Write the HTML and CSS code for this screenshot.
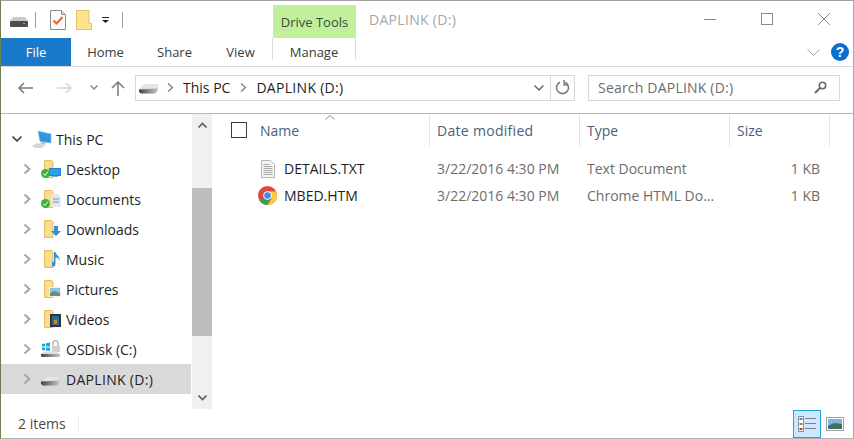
FILE: index.html
```html
<!DOCTYPE html>
<html lang="en">
  <head>
    <meta charset="UTF-8" />
    <title>DAPLINK (D:)</title>
    <link rel="stylesheet" href="styles.css">
  </head>
  <body>
    <svg class="defs" width="0" height="0">
      <defs>
        <linearGradient id="rim" x1="0" y1="0" x2="1" y2="0">
          <stop offset="0" stop-color="#3f3f3f"/>
          <stop offset=".55" stop-color="#8f8f8f"/>
          <stop offset="1" stop-color="#c4c4c4"/>
        </linearGradient>
      </defs>
      <symbol id="folder" viewBox="0 0 10 18">
        <path d="M.5.500h7l1.500 1v16H.5z" fill="#fbdc8c" stroke="#e3bd62"/>
      </symbol>
      <symbol id="chev" viewBox="0 0 10 12">
        <path d="M2.500 1.500 7.500 6l-5 4.500" fill="none" stroke="#a6a6a6" stroke-width="2"/>
      </symbol>
      <symbol id="drive" viewBox="0 0 20 10">
        <path d="M0 5.500 6 0h13.500v5z" fill="#e6e6e6" stroke="#c8c8c8" stroke-width=".6"/>
        <path d="M0 5.500 19.500 4.500V7L17 10H2L0 8z" fill="url(#rim)"/>
      </symbol>
    </svg>

    <div class="window">
      <!-- title bar -->
      <div class="titlebar">
        <div class="quick">
          <svg class="q-drive" width="18" height="10" viewBox="0 0 18 10">
            <path d="M0 4 3 0h12l3 4z" fill="#c9c9c9"/>
            <rect x="0" y="4" width="18" height="6" rx="1" fill="#4d4d4d"/>
            <rect x="13" y="6" width="2" height="1" fill="#5fd35f"/>
          </svg>
          <span class="q-sep"></span>
          <svg class="q-props" width="16" height="20" viewBox="0 0 16 20">
            <path d="M.5.500h11l4 4v15H.5z" fill="#fbfbfb" stroke="#8c8c8c" stroke-width="1"/>
            <path d="M11.500.500v4h4" fill="#d8d8d8" stroke="#8c8c8c"/>
            <path d="M3.500 10.500l3 3 6-6.500" fill="none" stroke="#e8663a" stroke-width="2"/>
          </svg>
          <svg class="q-folder" width="16" height="20" viewBox="0 0 16 20">
            <path d="M.5.500h12.500v13h2.500v6H.5z" fill="#fde28f" stroke="#e5c064"/>
          </svg>
          <svg class="q-more" width="7" height="6" viewBox="0 0 7 6">
            <path d="M0 0h7v1H0zM0 3h7L3.500 6z" fill="#222"/>
          </svg>
          <span class="q-sep q-sep-last"></span>
        </div>
        <div class="tool-tab">Drive Tools</div>
        <div class="title">DAPLINK (D:)</div>
        <div class="controls">
          <svg width="12" height="12" viewBox="0 0 12 12"><path d="M0 6.500h12" stroke="#8a8a8a"/></svg>
          <svg width="12" height="12" viewBox="0 0 12 12"><rect x=".5" y=".5" width="11" height="11" fill="none" stroke="#8a8a8a"/></svg>
          <svg width="12" height="12" viewBox="0 0 12 12"><path d="M0 0l12 12M12 0 0 12" stroke="#8a8a8a"/></svg>
        </div>
      </div>

      <!-- ribbon tabs -->
      <div class="tabs">
        <div class="tab tab-file">File</div>
        <div class="tab tab-home">Home</div>
        <div class="tab tab-share">Share</div>
        <div class="tab tab-view">View</div>
        <div class="tab tab-manage">Manage</div>
        <svg class="ribbon-toggle" width="13" height="7" viewBox="0 0 13 7"><path d="M.5.500l6 6 6-6" fill="none" stroke="#a8a8a8"/></svg>
        <div class="help">?</div>
      </div>

      <!-- address row -->
      <div class="addressbar">
        <div class="nav">
          <svg width="16" height="12" viewBox="0 0 16 12"><path d="M16 6H2M7 1 2 6l5 5" fill="none" stroke="#7a7a7a" stroke-width="1.500"/></svg>
          <svg class="nav-fwd" width="16" height="12" viewBox="0 0 16 12"><path d="M0 6h14M9 1l5 5-5 5" fill="none" stroke="#d5d5d5" stroke-width="1.500"/></svg>
          <svg class="nav-down" width="8" height="5" viewBox="0 0 8 5"><path d="M.5.500 4 4 7.500.500" fill="none" stroke="#8a8a8a" stroke-width="1.500"/></svg>
          <svg class="nav-up" width="14" height="16" viewBox="0 0 14 16"><path d="M7 16V2M1 8l6-6 6 6" fill="none" stroke="#7a7a7a" stroke-width="1.500"/></svg>
        </div>
        <div class="address">
          <svg class="addr-drive" width="19" height="10" viewBox="0 0 20 10"><use href="#drive"/></svg>
          <svg class="crumb-chev" width="7" height="9" viewBox="0 0 7 9"><path d="M1 .500 5.500 4.500 1 8.500" fill="none" stroke="#7a7a7a" stroke-width="1.200"/></svg>
          <span class="crumb">This PC</span>
          <svg class="crumb-chev" width="7" height="9" viewBox="0 0 7 9"><path d="M1 .500 5.500 4.500 1 8.500" fill="none" stroke="#7a7a7a" stroke-width="1.200"/></svg>
          <span class="crumb crumb-caps">DAPLINK (D:)</span>
          <svg class="addr-down" width="10" height="6" viewBox="0 0 10 6"><path d="M.5.500 5 5 9.500.500" fill="none" stroke="#6a6a6a" stroke-width="1.500"/></svg>
          <div class="refresh">
            <svg width="15" height="15" viewBox="0 0 15 15"><path d="M5 2.200a6 6 0 1 0 5 0" fill="none" stroke="#7c7c7c" stroke-width="1.600"/><path d="M9 0v5h4" fill="none" stroke="#7c7c7c" stroke-width="1.400"/></svg>
          </div>
        </div>
        <div class="search">
          <span>Search DAPLINK (D:)</span>
          <svg width="13" height="13" viewBox="0 0 13 13"><circle cx="8.500" cy="4.500" r="3.200" fill="none" stroke="#6a6a6a" stroke-width="1.600"/><path d="M6 7 1 12" stroke="#6a6a6a" stroke-width="2"/></svg>
        </div>
      </div>

      <div class="main">
        <!-- nav tree -->
        <div class="tree">
          <div class="tree-row tree-root">
            <svg class="tree-open" width="10" height="6" viewBox="0 0 10 6"><path d="M.5.500 5 5 9.500.500" fill="none" stroke="#555" stroke-width="1.800"/></svg>
            <svg width="20" height="17" viewBox="0 0 20 17">
              <path d="M6 0l13 3v9L8 10.500z" fill="#2f96e0" stroke="#7ec4ef" stroke-width=".6"/>
              <path d="M9 11l5 .5-1 2-4-.5z" fill="#bdbdbd"/>
              <path d="M0 15l5-3 9 1.500-4 3.500H3z" fill="#d6d6d6"/>
            </svg>
            <span>This PC</span>
          </div>
          <div class="tree-row">
            <svg class="tree-chev" width="10" height="12"><use href="#chev"/></svg>
            <div class="tree-icon">
              <svg class="fold" width="10" height="18"><use href="#folder"/></svg>
              <svg class="overlay-r" width="12" height="9" viewBox="0 0 12 9"><rect width="12" height="8" fill="#1a86d6"/><rect x="1" y="1" width="10" height="6" fill="#2aa0ea"/><rect x="3" y="8" width="6" height="1" fill="#6ab4ea"/></svg>
              <svg class="overlay-l" width="9" height="9" viewBox="0 0 9 9"><circle cx="4.500" cy="4.500" r="4.500" fill="#3fae3f"/><path d="M2 4.500l2 2 3-4" fill="none" stroke="#fff"/></svg>
            </div>
            <span>Desktop</span>
          </div>
          <div class="tree-row">
            <svg class="tree-chev" width="10" height="12"><use href="#chev"/></svg>
            <div class="tree-icon">
              <svg class="fold" width="10" height="18"><use href="#folder"/></svg>
              <svg class="overlay-r" width="10" height="13" viewBox="0 0 10 13"><path d="M0 0h7l3 3v10H0z" fill="#e6e6e6"/><path d="M2 5h6M2 8h6" stroke="#5b9bd5"/></svg>
              <svg class="overlay-l" width="9" height="9" viewBox="0 0 9 9"><circle cx="4.500" cy="4.500" r="4.500" fill="#3fae3f"/><path d="M2 4.500l2 2 3-4" fill="none" stroke="#fff"/></svg>
            </div>
            <span>Documents</span>
          </div>
          <div class="tree-row">
            <svg class="tree-chev" width="10" height="12"><use href="#chev"/></svg>
            <div class="tree-icon">
              <svg class="fold" width="10" height="18"><use href="#folder"/></svg>
              <svg class="overlay-r" width="10" height="11" viewBox="0 0 10 11"><path d="M3 0h4v5h3l-5 5-5-5h3z" fill="#2f8fdd"/></svg>
            </div>
            <span>Downloads</span>
          </div>
          <div class="tree-row">
            <svg class="tree-chev" width="10" height="12"><use href="#chev"/></svg>
            <div class="tree-icon">
              <svg class="fold" width="10" height="18"><use href="#folder"/></svg>
              <svg class="overlay-r" width="9" height="15" viewBox="0 0 9 15"><path d="M2 0h1.500c0 3 5 4 4 9C7 6 5 5.500 3.500 5.500V12a3 2.500 0 1 1-1.500-2z" fill="#2f8fdd"/></svg>
            </div>
            <span>Music</span>
          </div>
          <div class="tree-row">
            <svg class="tree-chev" width="10" height="12"><use href="#chev"/></svg>
            <div class="tree-icon">
              <svg class="fold" width="10" height="18"><use href="#folder"/></svg>
              <svg class="overlay-r" width="12" height="10" viewBox="0 0 12 10"><rect width="12" height="10" fill="#f1f1f1"/><rect x="1" y="1" width="10" height="5" fill="#8cc1e8"/><path d="M1 6l4-2 6 2v3H1z" fill="#6e8f6b"/></svg>
            </div>
            <span>Pictures</span>
          </div>
          <div class="tree-row">
            <svg class="tree-chev" width="10" height="12"><use href="#chev"/></svg>
            <div class="tree-icon">
              <svg class="fold" width="10" height="18"><use href="#folder"/></svg>
              <svg class="overlay-r" width="11" height="13" viewBox="0 0 11 13"><rect width="11" height="13" fill="#333"/><rect x="2" y="2" width="7" height="9" fill="#2e6c94"/><rect x="4" y="6" width="3" height="4" fill="#c8862a"/></svg>
            </div>
            <span>Videos</span>
          </div>
          <div class="tree-row">
            <svg class="tree-chev" width="10" height="12"><use href="#chev"/></svg>
            <svg class="tree-disk" width="20" height="18" viewBox="0 0 20 18">
              <path d="M12 6V3a2.500 2.500 0 0 1 5 0v3" fill="none" stroke="#a8a8a8" stroke-width="1.200"/>
              <rect x="11" y="6" width="8" height="6" fill="#cfcfcf"/>
              <path d="M1 4l3-.5v3H1zM5 3.300 9 2.500v4H5zM1 7.500h3v3l-3-.5zM5 7.500h4V11l-4-.5z" fill="#18a5e6"/>
              <path d="M0 14l3-2.500h13l3 2.500z" fill="#dedede"/>
              <path d="M0 14h19v2l-1 1H1l-1-1z" fill="url(#rim)"/>
            </svg>
            <span>OSDisk (C:)</span>
          </div>
          <div class="tree-row tree-selected">
            <svg class="tree-chev" width="10" height="12"><use href="#chev"/></svg>
            <svg class="tree-drive" width="19" height="10" viewBox="0 0 20 10"><use href="#drive"/></svg>
            <span>DAPLINK (D:)</span>
          </div>
        </div>

        <div class="scrollbar">
          <svg class="scroll-arrow" width="9" height="6" viewBox="0 0 9 6"><path d="M.5 5.500l4-4 4 4" fill="none" stroke="#606060" stroke-width="1.600"/></svg>
          <div class="scroll-top"></div>
          <div class="scroll-thumb"></div>
          <div class="scroll-bottom"></div>
          <svg class="scroll-arrow" width="9" height="6" viewBox="0 0 9 6"><path d="M.5.500l4 4 4-4" fill="none" stroke="#606060" stroke-width="1.600"/></svg>
        </div>

        <!-- file list -->
        <div class="list">
          <div class="list-head">
            <div class="col col-name">
              <span class="checkbox"></span>
              <span>Name</span>
              <svg class="sort" width="10" height="5" viewBox="0 0 10 5"><path d="M.5 4.500l4.500-4 4.500 4" fill="none" stroke="#8a8a8a"/></svg>
            </div>
            <div class="col col-date">Date modified</div>
            <div class="col col-type">Type</div>
            <div class="col col-size">Size</div>
          </div>
          <div class="file">
            <div class="cell-name">
              <svg width="14" height="18" viewBox="0 0 14 18">
                <path d="M.5.500h9l4 4v13H.5z" fill="#f4f4f4" stroke="#b5b5b5"/>
                <path d="M2.500 4.500h6M2.500 6.500h9M2.500 8.500h9M2.500 10.500h9M2.500 12.500h9M2.500 14.500h9" stroke="#a9a9a9"/>
              </svg>
              <span>DETAILS.TXT</span>
            </div>
            <div class="cell-date">3/22/2016 4:30 PM</div>
            <div class="cell-type">Text Document</div>
            <div class="cell-size">1 KB</div>
          </div>
          <div class="file">
            <div class="cell-name">
              <svg class="chrome" width="19" height="19" viewBox="0 0 19 19">
                <circle cx="9.500" cy="9.500" r="9.500" fill="#dd4a3d"/>
                <path d="M9.500 9.500 1.300 14.300A9.500 9.500 0 0 0 9.500 19l4.700-8z" fill="#3a9c4f"/>
                <path d="M9.500 5.500H18.100A9.500 9.500 0 0 1 9.500 19l4-6.500z" fill="#fbc93e"/>
                <circle cx="9.500" cy="9.500" r="4.300" fill="#fff"/>
                <circle cx="9.500" cy="9.500" r="3.300" fill="#4a87e8"/>
              </svg>
              <span>MBED.HTM</span>
            </div>
            <div class="cell-date">3/22/2016 4:30 PM</div>
            <div class="cell-type">Chrome HTML Do...</div>
            <div class="cell-size">1 KB</div>
          </div>
        </div>
      </div>

      <!-- status bar -->
      <div class="statusbar">
        <span class="count">2 items</span>
        <span class="status-sep"></span>
        <div class="views">
          <div class="view view-on">
            <svg width="19" height="16" viewBox="0 0 19 16">
              <rect x=".5" y=".5" width="5" height="15" fill="#fff" stroke="#8f8f8f"/>
              <rect x="1.500" y="2" width="3" height="2" fill="#4a8db8"/>
              <rect x="1.500" y="7" width="3" height="2" fill="#a5813f"/>
              <rect x="1.500" y="12" width="3" height="2" fill="#c83a30"/>
              <path d="M7 2.500h11M7 7.500h11M7 12.500h11" stroke="#7f7f7f"/>
            </svg>
          </div>
          <svg class="view-large" width="18" height="14" viewBox="0 0 18 14">
            <rect x=".5" y=".5" width="17" height="13" fill="#fff" stroke="#a0a0a0"/>
            <rect x="2" y="2" width="14" height="10" fill="#7db6e2"/>
            <path d="M2 9l6-3 8 1v5H2z" fill="#3f6f62"/>
          </svg>
        </div>
      </div>
    </div>
  </body>
</html>
```

FILE: styles.css
```css
* {
  box-sizing: border-box;
}

html,
body {
  margin: 0;
  padding: 0;
  background-color: #fff;
}

body {
  font-family: "Open Sans", "Noto Sans", sans-serif;
  font-size: 14px;
}

svg {
  display: block;
  flex: none;
}

.defs {
  position: absolute;
}

.window {
  width: 854px;
  height: 439px;
  display: flex;
  flex-direction: column;
  border-top: 1px solid #a3a3a3;
  border-left: 1px solid #6d7f50;
  border-right: 1px solid #a8a8a8;
  border-bottom: 1px solid #b0b0b0;
  background-color: #fff;
  overflow: hidden;
}

/* title bar */
.titlebar {
  height: 37px;
  display: flex;
  flex: none;
}

.quick {
  width: 272px;
  display: flex;
  align-items: center;
  padding-left: 9px;
}

.q-drive {
  margin-top: 5px;
}

.q-sep {
  width: 1px;
  height: 16px;
  margin: 0 14px 0 7px;
  background-color: #a0a0a0;
}

.q-folder {
  margin-left: 10px;
}

.q-more {
  margin-left: 10px;
}

.q-sep-last {
  margin-left: 13px;
}

.tool-tab {
  width: 83px;
  margin-top: 4px;
  background-color: #c1f09b;
  color: #3c4a3c;
  font-size: 13px;
  display: flex;
  align-items: center;
  justify-content: center;
}

.title {
  margin: 11px 0 0 13px;
  color: #a6a6a6;
  font-size: 14px;
  line-height: 16px;
  letter-spacing: 0.3px;
}

.controls {
  margin-left: auto;
  padding: 12px 23px 0 0;
  display: flex;
  gap: 45px;
}

/* ribbon tabs */
.tabs {
  height: 29px;
  flex: none;
  display: flex;
  align-items: center;
  border-bottom: 1px solid #dadada;
}

.tab {
  height: 28px;
  font-size: 13px;
  color: #3b3b3b;
  display: flex;
  align-items: center;
  justify-content: center;
}

.tab-file {
  width: 70px;
  background-color: #1979ca;
  color: #fff;
}

.tab-home {
  width: 69px;
}

.tab-share {
  width: 69px;
}

.tab-view {
  width: 63px;
}

.tab-manage {
  width: 84px;
  height: 22px;
  margin-bottom: 6px;
  padding-top: 6px;
  border-left: 1px solid #dadada;
  border-right: 1px solid #dadada;
}

.ribbon-toggle {
  margin-left: auto;
}

.help {
  width: 18px;
  height: 18px;
  margin: 0 4px 0 11px;
  border-radius: 50%;
  background-color: #0a6ecf;
  color: #fff;
  font-family: "Liberation Sans", sans-serif;
  font-size: 14px;
  font-weight: bold;
  line-height: 18px;
  text-align: center;
}

/* address row */
.addressbar {
  height: 47px;
  flex: none;
  display: flex;
  align-items: center;
  padding-bottom: 5px;
  border-bottom: 1px solid #b8b8b8;
}

.nav {
  width: 134px;
  display: flex;
  align-items: center;
  padding-left: 16px;
}

.nav-fwd {
  margin-left: 24px;
}

.nav-down {
  margin-left: 17px;
}

.nav-up {
  margin-left: 13px;
}

.address {
  width: 440px;
  height: 26px;
  display: flex;
  align-items: center;
  border: 1px solid #d9d9d9;
  padding-left: 3px;
}

.addr-drive {
  margin: 2px 9px 0 0;
}

.crumb-chev {
  margin-right: 9px;
}

.crumb {
  margin-right: 10px;
  color: #1e1e1e;
  font-size: 14px;
}

.crumb-caps {
  letter-spacing: 0.3px;
}

.addr-down {
  margin-left: auto;
  margin-right: 6px;
}

.refresh {
  width: 24px;
  height: 24px;
  display: flex;
  align-items: center;
  justify-content: center;
  border-left: 1px solid #d9d9d9;
}

.search {
  width: 252px;
  height: 26px;
  margin-left: 13px;
  padding: 0 12px 0 9px;
  display: flex;
  align-items: center;
  justify-content: space-between;
  border: 1px solid #d9d9d9;
  color: #6d6d6d;
  letter-spacing: 0.2px;
}

/* main area */
.main {
  height: 295px;
  flex: none;
  display: flex;
}

.tree {
  width: 191px;
  padding-top: 10px;
}

.tree-row {
  height: 30px;
  display: flex;
  align-items: center;
  padding-left: 21px;
  color: #1e1e1e;
}

.tree-root {
  padding-left: 11px;
}

.tree-open {
  margin-right: 10px;
}

.tree-chev {
  margin-right: 9px;
}

.tree-row > span {
  margin-left: 5px;
}

.tree-root > span {
  margin-left: 4px;
}

.tree-selected {
  margin-right: 1px;
  background-color: #d9d9d9;
}

.tree-selected > span {
  margin-left: 6px;
  letter-spacing: 0.3px;
}

.tree-drive {
  margin-top: 4px;
}

.tree-icon {
  position: relative;
  width: 20px;
  height: 18px;
}

.fold {
  margin-left: 3px;
}

.overlay-r {
  position: absolute;
  right: 0;
  bottom: 1px;
}

.overlay-l {
  position: absolute;
  left: 0;
  bottom: 0;
}

.scrollbar {
  width: 20px;
  display: flex;
  flex-direction: column;
  align-items: center;
  background-color: #f0f0f0;
  padding: 8px 0;
}

.scroll-top {
  height: 60px;
}

.scroll-thumb {
  width: 100%;
  height: 148px;
  background-color: #bdbdbd;
}

.scroll-bottom {
  flex: 1;
}

/* file list */
.list {
  flex: 1;
  min-width: 0;
}

.list-head {
  height: 32px;
  display: flex;
  color: #4c607a;
}

.col {
  height: 32px;
  padding: 4px 0 0 7px;
  line-height: 26px;
  border-right: 1px solid #e5e5e5;
}

.col-name {
  position: relative;
  width: 218px;
  display: flex;
  align-items: flex-start;
  padding-left: 19px;
}

.checkbox {
  width: 16px;
  height: 16px;
  margin: 4px 13px 0 0;
  border: 1px solid #3c3c3c;
}

.sort {
  position: absolute;
  left: 113px;
  top: 1px;
}

.col-date {
  width: 150px;
  letter-spacing: 0.3px;
}

.col-type {
  width: 150px;
}

.col-size {
  width: 100px;
}

.file {
  height: 27px;
  display: flex;
  align-items: center;
  color: #6d6d6d;
}

.list-head + .file {
  margin-top: 9px;
}

.cell-name {
  width: 218px;
  display: flex;
  align-items: center;
  gap: 9px;
  padding-left: 49px;
  color: #1e1e1e;
}

.chrome {
  margin-left: -3px;
  margin-right: -2px;
}

.cell-date,
.cell-type {
  width: 150px;
  padding-left: 7px;
}

.cell-size {
  width: 90px;
  text-align: right;
}

/* status bar */
.statusbar {
  flex: 1;
  display: flex;
  align-items: center;
  padding-left: 17px;
  color: #4a4a4a;
}

.status-sep {
  width: 1px;
  height: 14px;
  margin-left: 12px;
  background-color: #ececec;
}

.views {
  margin-left: auto;
  height: 100%;
  display: flex;
  align-items: center;
  gap: 5px;
  padding-right: 9px;
}

.view {
  width: 28px;
  height: 28px;
  display: flex;
  align-items: center;
  justify-content: center;
  border: 1px solid #26a0da;
  background-color: #cce8ff;
}
```
